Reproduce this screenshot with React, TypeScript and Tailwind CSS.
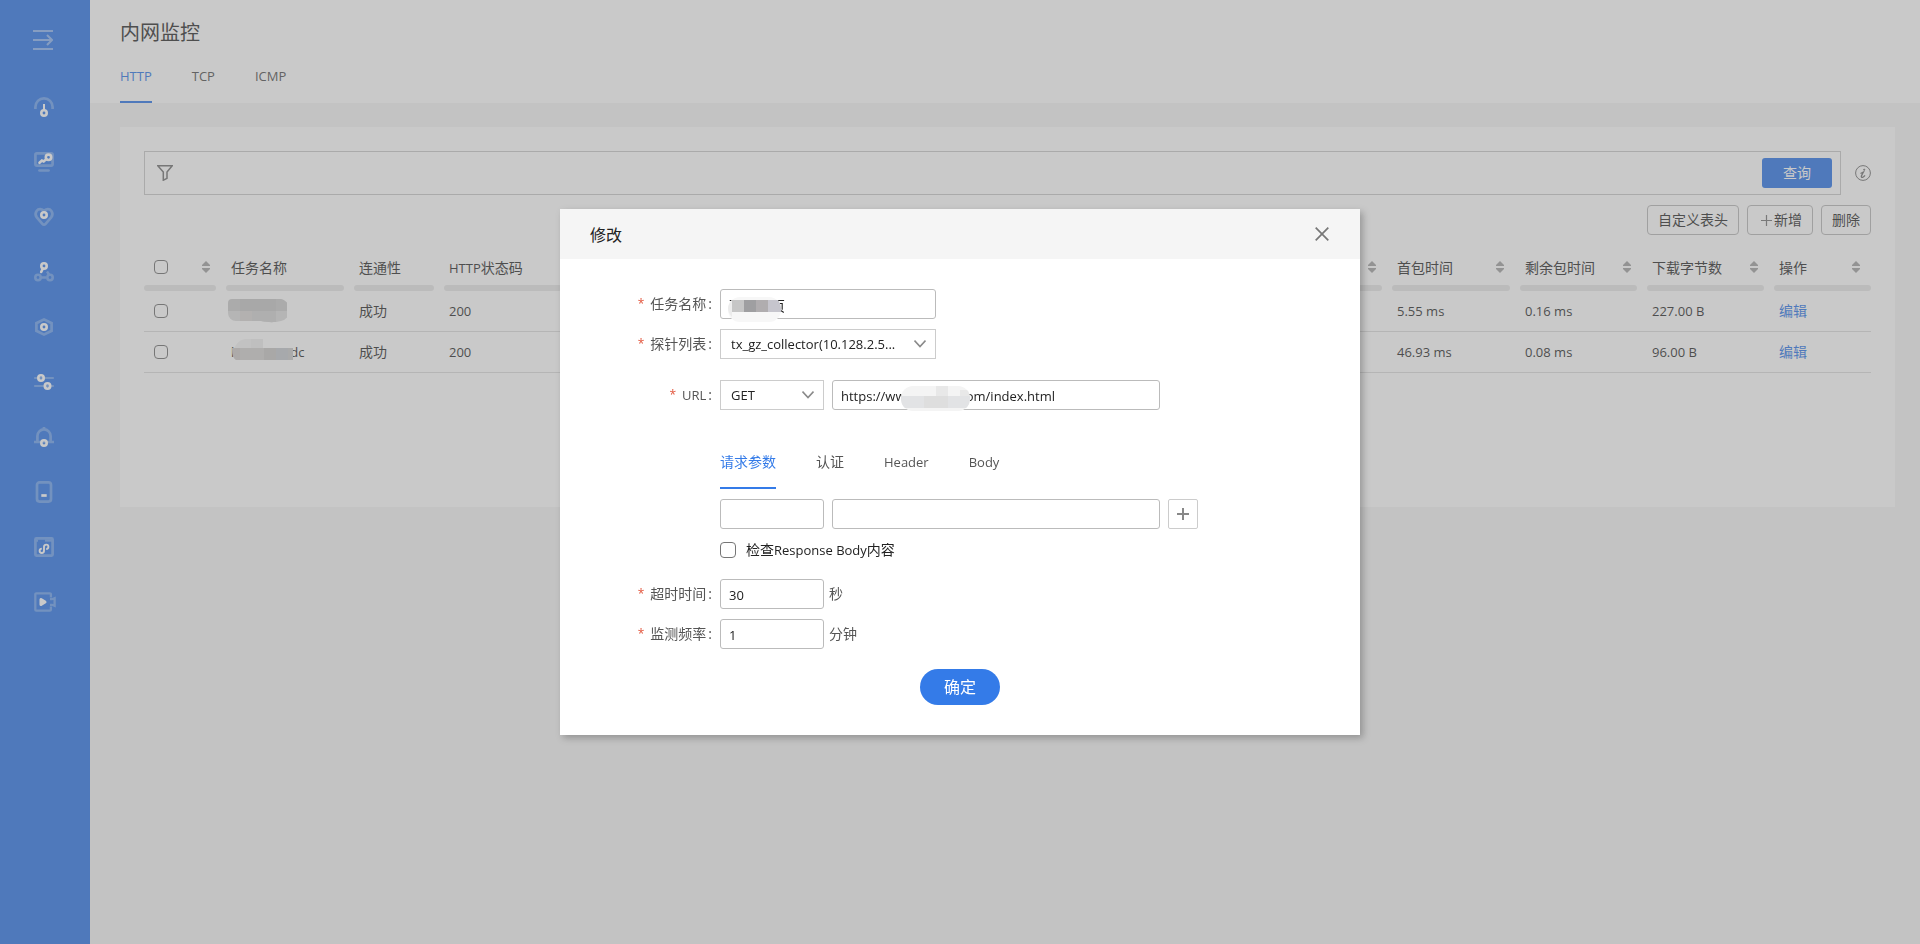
import type { ReactNode } from "react";

const params = ["请求参数", "认证", "Header", "Body"];
const pageTabs = ["HTTP", "TCP", "ICMP"];

const rows = [
  { status: "成功", code: "200", first: "5.55 ms", rest: "0.16 ms", bytes: "227.00 B" },
  { status: "成功", code: "200", first: "46.93 ms", rest: "0.08 ms", bytes: "96.00 B" },
];

const columns = [
  { key: "name", title: "任务名称", width: "w-32", sort: false },
  { key: "status", title: "连通性", width: "w-[90px]", sort: false },
  { key: "code", title: "HTTP状态码", width: "w-32", sort: false },
  { key: "more", title: "", width: "", sort: true },
  { key: "first", title: "首包时间", width: "w-32", sort: true },
  { key: "rest", title: "剩余包时间", width: "w-[127px]", sort: true },
  { key: "bytes", title: "下载字节数", width: "w-[127px]", sort: true },
  { key: "action", title: "操作", width: "w-[102px]", sort: true },
];

function Ring({ x, y }: { x: number; y: number }) {
  return <circle cx={x} cy={y} r="2.7" strokeWidth="2.6" />;
}

const menu: { label: string; faint: ReactNode; solid: ReactNode }[] = [
  {
    label: "总览",
    faint: <path d="M1.4 12v-2a8.6 8.6 0 0 1 17.2 0v2" />,
    solid: (
      <>
        <path d="M10 7v6" strokeWidth="2" />
        <Ring x={10} y={16} />
      </>
    ),
  },
  {
    label: "监控",
    faint: (
      <>
        <rect x="1.4" y="1.4" width="17.2" height="12.2" rx="1.5" />
        <path d="M5.5 18.5h9" strokeLinecap="round" />
      </>
    ),
    solid: (
      <>
        <path d="M5.5 10.8l2.4-2.3 1.8 1 2.6-2.4" strokeWidth="2.6" strokeLinecap="round" />
        <Ring x={14.5} y={5.3} />
      </>
    ),
  },
  {
    label: "健康",
    faint: (
      <path d="M10 4.2C8.2 1.6 4.4 1.5 2.6 4c-1.4 2-1.2 4.6.2 6.4l5.6 6.5c.9 1 2.3 1 3.2 0l5.6-6.5c1.4-1.8 1.6-4.4.2-6.4-1.8-2.5-5.6-2.4-7.4.2z" />
    ),
    solid: <Ring x={10} y={8} />,
  },
  {
    label: "拓扑",
    faint: (
      <>
        <Ring x={4} y={15.5} />
        <Ring x={16} y={15.5} />
        <path d="M7 15.5h5M13 9.5l2.400 3.500" strokeWidth="2.4" />
      </>
    ),
    solid: (
      <>
        <path d="M8.8 6.5L7.2 10" strokeWidth="2.6" strokeLinecap="round" />
        <Ring x={10} y={4} />
      </>
    ),
  },
  {
    label: "节点",
    faint: <path d="M10 2.4l7.6 3.8v7.6L10 17.6l-7.6-3.8V6.2z" />,
    solid: <Ring x={10} y={10} />,
  },
  {
    label: "设置",
    faint: <path d="M1 6h18M1 14h18" strokeWidth="2.2" strokeLinecap="round" />,
    solid: (
      <>
        <Ring x={7} y={6} />
        <Ring x={13.5} y={14} />
      </>
    ),
  },
  {
    label: "告警",
    faint: <path d="M10 0v2.5M0 15h20M3.4 15V9a6.6 6.6 0 0 1 13.2 0v6" />,
    solid: <Ring x={10} y={16} />,
  },
  {
    label: "终端",
    faint: <rect x="3" y="0.4" width="14" height="19.2" rx="2.5" />,
    solid: <path d="M7.300 13.500h5.400" />,
  },
  {
    label: "接入",
    faint: (
      <>
        <rect x="1.4" y="1.4" width="17.2" height="17.2" rx="1" />
        <path d="M11 3.6h7" strokeWidth="2.2" />
        <path d="M2 3.6h2" strokeWidth="2.2" />
      </>
    ),
    solid: (
      <path d="M12.2 12a2.2 2.2 0 1 0-2.2-2.2v4a2.2 2.2 0 1 1-2.2-2.2" strokeWidth="1.9" />
    ),
  },
  {
    label: "回放",
    faint: (
      <path
        d="M16.9 5.5V2.3c0-.6-.4-1-1-1H2.3c-.6 0-1 .4-1 1v15.4c0 .6.4 1 1 1h13.6c.6 0 1-.4 1-1v-3.2M16 7.2h2l2.6-1v7.6l-2.6-1h-2"
        strokeWidth="2.3"
      />
    ),
    solid: <path d="M7 7.500v5l4-2.500z" strokeWidth="3" strokeLinejoin="round" />,
  },
];

function Sidebar() {
  return (
    <nav className="flex w-[90px] shrink-0 flex-col bg-[#347be8] pr-[2px]">
      <button type="button" aria-label="展开菜单" className="flex h-20 items-center justify-center pr-[2px]">
        <svg width="20" height="20" viewBox="0 0 20 20" fill="none" stroke="#fff" strokeWidth="2" opacity="0.45">
          <path d="M0 1h20M0 19h20M0 10h19M14 5l5 5-5 5" />
        </svg>
      </button>
      {menu.map((item) => (
        <a key={item.label} href="#" aria-label={item.label} className="flex h-[55px] justify-center pt-[15px]">
          <svg width="24" height="24" viewBox="-2 -2 24 24" fill="none" stroke="#fff" strokeWidth="2.7">
            <g opacity="0.3">{item.faint}</g>
            {item.solid}
          </svg>
        </a>
      ))}
    </nav>
  );
}

function SortIcon() {
  return (
    <svg width="8" height="12" viewBox="0 0 8 12" fill="#a6a6a6" className="shrink-0">
      <path d="M4 0l4 4v1H0V4zM4 12l4-4V7H0v1z" />
    </svg>
  );
}

function Chevron() {
  return (
    <svg
      width="12"
      height="8"
      viewBox="0 0 12 8"
      fill="none"
      stroke="#8a8a8a"
      strokeWidth="1.6"
      className="pointer-events-none absolute right-[10px] top-[11px]"
    >
      <path d="M.5.600L6 6.600l5.500-6" />
    </svg>
  );
}

function PlusIcon() {
  return (
    <svg width="16" height="12" viewBox="0 0 16 12" stroke="#7b7b7b" strokeWidth="1.2">
      <path d="M3 6.500h11M8.500 1v11" />
    </svg>
  );
}

// pixelated patches that hide private names
function NameMask() {
  return (
    <svg width="59" height="24" viewBox="0 0 59 24" className="-ml-[3px]">
      <clipPath id="name-mask">
        <path d="M4 0h44a11 11 0 0 1 5 22c-8 2-14 1-20 0H8a8 8 0 0 1-8-8V4a4 4 0 0 1 4-4z" />
      </clipPath>
      <g clipPath="url(#name-mask)">
        <path fill="#cecece" d="M0 0h59v12H0z" />
        <path fill="#c8c8c8" d="M12 0h36v12H12z" />
        <path fill="#dedede" d="M0 12h59v12H0z" />
        <path fill="#dad7d5" d="M12 12h12v12H12z" />
        <path fill="#d4d4d4" d="M24 12h24v12H24z" />
      </g>
    </svg>
  );
}

function HostMask() {
  return (
    <svg width="62" height="22" viewBox="0 0 62 22" className="z-10 -ml-[2px] -mr-1 mb-1">
      <path fill="#f4f4f4" d="M2 10c2-6 7-10 12-10h17v10z" />
      <path fill="#efefef" d="M19 0h12v10H19z" />
      <path fill="#d0ccca" d="M0 9h8v12H4c-3-2-4-6-4-12z" />
      <path fill="#d4d2d0" d="M8 9h24v12H8z" />
      <path fill="#cac9c6" d="M32 9h12v12H32z" />
      <path fill="#c6cacf" d="M44 9h12v12H44z" />
      <path fill="#cbcbcb" d="M56 9h5v12h-5z" />
    </svg>
  );
}

function TaskMask() {
  return (
    <svg width="53" height="25" viewBox="0 0 53 25" className="pointer-events-none absolute left-2 top-2">
      <rect width="53" height="25" rx="12" fill="#f7f7f7" />
      <path fill="#ececec" d="M4 3v17C1 17 0 14 0 11s2-6 4-8z" />
      <path fill="#c6c6c6" d="M4 3h12v12H4z" />
      <path fill="#9f9fa1" d="M16 3h12v12H16z" />
      <path fill="#b0adaf" d="M28 3h12v12H28z" />
      <path fill="#c6c5cd" d="M40 3h10c2 3 3 6 3 9v3H40z" />
    </svg>
  );
}

function UrlMask() {
  return (
    <svg width="69" height="25" viewBox="0 0 69 25" className="pointer-events-none absolute left-[69px] top-[6px]">
      <clipPath id="url-mask">
        <rect width="69" height="25" rx="12" />
      </clipPath>
      <g clipPath="url(#url-mask)">
        <path fill="#f4f4f4" d="M0 0h69v25H0z" />
        <path fill="#e8e8e8" d="M35 0h12v10H35zM59 4h10v6H59z" />
        <path fill="#e2e3e5" d="M0 10h69v12H0z" />
        <path fill="#dedede" d="M23 10h24v12H23z" />
      </g>
    </svg>
  );
}

const inputClass =
  "h-[30px] rounded-[3px] border border-[#bbb] bg-white px-2 pt-[2px] text-[#222] outline-none";
const selectClass =
  "h-[30px] w-full appearance-none border border-[#ccc] bg-white pl-[10px] text-[13px] text-[#222] outline-none";
const actionClass =
  "flex h-[30px] items-center rounded-[4px] border border-[#bbb] px-[10px] text-[#333]";
const tabClass = "h-[55px] border-b-2 pt-[2px]";

function FormRow({ label, htmlFor, children }: { label?: string; htmlFor?: string; children: ReactNode }) {
  return (
    <div className="flex">
      <div className="flex h-[30px] w-[160px] shrink-0 items-center justify-end pr-2">
        {label && (
          <label htmlFor={htmlFor} className="flex items-center text-[#555]">
            <span className="mr-[6px] text-xs text-[#e2543b]">*</span>
            {label === "URL" ? <span className="text-[13px]">{label}</span> : label}
            <span className="ml-[2px]">:</span>
          </label>
        )}
      </div>
      {children}
    </div>
  );
}

function EditDialog() {
  return (
    <div className="fixed inset-0 z-20 flex items-center justify-center bg-[#787878]/40">
      <div
        role="dialog"
        aria-labelledby="dialog-title"
        className="w-[800px] bg-white shadow-[3px_3px_7px_rgba(0,0,0,0.25)]"
      >
        <div className="flex h-[50px] items-center justify-between bg-[#f5f5f5] px-[30px]">
          <h2 id="dialog-title" className="pt-[2px] text-base text-[#222]">
            修改
          </h2>
          <button type="button" aria-label="关闭" className="flex size-4 items-center justify-center">
            <svg width="14" height="14" viewBox="0 0 14 14" stroke="#777" strokeWidth="1.7">
              <path d="M.7.7l12.600 12.600M13.300.7L.7 13.300" />
            </svg>
          </button>
        </div>
        <form className="flex flex-col pb-[30px] pt-[30px]">
          <FormRow label="任务名称" htmlFor="task">
            <div className="relative w-[216px]">
              <input id="task" type="text" defaultValue="下　　页" className={`${inputClass} w-full`} />
              <TaskMask />
            </div>
          </FormRow>
          <div className="mt-[10px]">
            <FormRow label="探针列表" htmlFor="probe">
              <div className="relative w-[216px]">
                <select id="probe" className={selectClass}>
                  <option>tx_gz_collector(10.128.2.5...</option>
                </select>
                <Chevron />
              </div>
            </FormRow>
          </div>
          <div className="mt-[21px]">
            <FormRow label="URL" htmlFor="url">
              <div className="flex gap-2">
                <div className="relative w-[104px]">
                  <select aria-label="请求方法" className={selectClass}>
                    <option>GET</option>
                    <option>POST</option>
                  </select>
                  <Chevron />
                </div>
                <div className="relative w-[328px]">
                  <input
                    id="url"
                    type="text"
                    defaultValue={"https://www.\u00a0\u00a0\u00a0\u00a0\u00a0\u00a0\u00a0\u00a0\u00a0\u00a0\u00a0\u00a0com/index.html"}
                    className={`${inputClass} w-full text-[13px]`}
                  />
                  <UrlMask />
                </div>
              </div>
            </FormRow>
          </div>
          <div className="ml-[160px] mt-6 flex gap-10" role="tablist">
            {params.map((tab, i) => (
              <button
                key={tab}
                type="button"
                role="tab"
                aria-selected={i === 0}
                className={`${tabClass} ${i > 1 ? "text-[13px]" : ""} ${
                  i === 0 ? "border-[#347be8] text-[#347be8]" : "border-transparent text-[#555]"
                }`}
              >
                {tab}
              </button>
            ))}
          </div>
          <div className="mt-[10px]">
            <FormRow>
              <div className="flex gap-2">
                <input type="text" aria-label="参数名" className={`${inputClass} w-[104px]`} />
                <input type="text" aria-label="参数值" className={`${inputClass} w-[328px]`} />
                <button
                  type="button"
                  aria-label="添加参数"
                  className="flex size-[30px] items-center justify-center rounded-[2px] border border-[#ccc]"
                >
                  <svg width="12" height="12" viewBox="0 0 12 12" stroke="#888" strokeWidth="2">
                    <path d="M0 6h12M6 0v12" />
                  </svg>
                </button>
              </div>
            </FormRow>
          </div>
          <label className="ml-[160px] mt-[10px] flex h-[22px] items-center gap-[10px] text-[#222]">
            <input type="checkbox" className="size-4 appearance-none rounded-[4px] border border-[#767676]" />
            <span>
              检查<span className="text-[13px]">Response Body</span>内容
            </span>
          </label>
          <div className="mt-[18px] flex flex-col gap-[10px]">
            <FormRow label="超时时间" htmlFor="timeout">
              <div className="flex items-center gap-[5px] text-[#555]">
                <input id="timeout" type="text" defaultValue="30" className={`${inputClass} w-[104px] text-[13px]`} />
                秒
              </div>
            </FormRow>
            <FormRow label="监测频率" htmlFor="interval">
              <div className="flex items-center gap-[5px] text-[#555]">
                <input id="interval" type="text" defaultValue="1" className={`${inputClass} w-[104px] text-[13px]`} />
                分钟
              </div>
            </FormRow>
          </div>
          <button type="submit" className="mx-auto mt-5 h-9 w-20 rounded-full bg-[#347be8] text-base text-white">
            确定
          </button>
        </form>
      </div>
    </div>
  );
}

function TaskTable() {
  const check = "block size-[14px] appearance-none rounded-[4px] border border-[#767676]";
  return (
    <table className="mt-[14px] w-full table-fixed border-separate border-spacing-0 text-left text-[#333]">
      <thead>
        <tr>
          <th className="w-[77px] p-0 pr-[5px] font-normal">
            <div className="flex h-9 items-center justify-between pl-[10px] pr-[6px]">
              <input type="checkbox" aria-label="全选" className={check} />
              <SortIcon />
            </div>
            <div className="h-[6px] rounded-full bg-[#e8e8e8]" />
          </th>
          {columns.map((col) => (
            <th
              key={col.key}
              className={`p-0 pl-[5px] font-normal ${col.key === "action" ? "" : "pr-[5px]"} ${col.width}`}
            >
              <div
                className={`flex h-9 items-center justify-between pl-[5px] ${
                  col.key === "action" ? "pr-[11px]" : "pr-[6px]"
                }`}
              >
                {col.key === "code" ? (
                  <span className="pt-[2px]">
                    <span className="text-[13px]">HTTP</span>状态码
                  </span>
                ) : (
                  <span className="pt-[2px]">{col.title}</span>
                )}
                {col.sort && <SortIcon />}
              </div>
              <div className="h-[6px] rounded-full bg-[#e8e8e8]" />
            </th>
          ))}
        </tr>
      </thead>
      <tbody>
        {rows.map((row, i) => (
          <tr key={row.first} className="h-[41px] [&>td]:border-b [&>td]:border-[#dedede] [&>td]:py-0">
            <td className="pl-[10px]">
              <input type="checkbox" aria-label={`选择第${i + 1}行`} className={check} />
            </td>
            <td className="pl-[10px]">
              {i === 0 ? (
                <NameMask />
              ) : (
                <div className="flex items-center text-[13px]">
                  l
                  <HostMask />
                  dc
                </div>
              )}
            </td>
            <td className="pl-[10px]">{row.status}</td>
            <td className="pl-[10px] text-[13px]">{row.code}</td>
            <td />
            <td className="pl-[10px] text-[13px]">{row.first}</td>
            <td className="pl-[10px] text-[13px]">{row.rest}</td>
            <td className="pl-[10px] text-[13px]">{row.bytes}</td>
            <td className="pl-[10px]">
              <a href="#" className="text-[#347be8]">
                编辑
              </a>
            </td>
          </tr>
        ))}
      </tbody>
    </table>
  );
}

function App() {
  return (
    <div className="flex min-h-screen bg-[#f5f5f5] font-['Open_Sans','Noto_Sans_CJK_SC',sans-serif] text-[14px] leading-5">
      <Sidebar />
      <main className="flex min-w-0 flex-1 flex-col">
        <header className="bg-white px-[30px] pt-4">
          <h1 className="pt-[2px] text-[20px] leading-[30px] text-[#333]">内网监控</h1>
          <div className="flex gap-10 text-[13px]" role="tablist">
            {pageTabs.map((tab, i) => (
              <button
                key={tab}
                type="button"
                role="tab"
                aria-selected={i === 0}
                className={`${tabClass} ${
                  i === 0 ? "border-[#347be8] text-[#347be8]" : "border-transparent text-[#555]"
                }`}
              >
                {tab}
              </button>
            ))}
          </div>
        </header>
        <section className="ml-[30px] mr-[25px] mt-6 min-h-[380px] bg-white p-6">
          <div className="flex items-center gap-[14px]">
            <div className="flex h-11 flex-1 items-center border border-[#ccc] pl-3 pr-2">
              <svg width="16" height="16" viewBox="0 0 16 16" fill="none" stroke="#777" strokeWidth="1.500">
                <path d="M.8.8h14.400L10 7v6.300L6.300 15.200V7z" />
              </svg>
              <input type="text" aria-label="筛选" className="h-full min-w-0 flex-1 px-2 outline-none" />
              <button type="button" className="h-[30px] w-[70px] rounded-[3px] bg-[#347be8] text-white">
                查询
              </button>
            </div>
            <button type="button" aria-label="说明">
              <svg width="16" height="16" viewBox="0 0 16 16" fill="none" stroke="#777">
                <circle cx="8" cy="8" r="7.400" />
                <path d="M5.500 8.500l3-1.500c-1 2-2.200 3.300-2.200 4.600 0 1.600 2.400.6 3.700-1.200" strokeWidth="1.300" />
                <circle cx="9.200" cy="4.700" r=".6" fill="#777" />
              </svg>
            </button>
          </div>
          <div className="mt-[10px] flex justify-end gap-2">
            <button type="button" className={actionClass}>
              自定义表头
            </button>
            <button type="button" className={actionClass}>
              <PlusIcon />
              新增
            </button>
            <button type="button" className={actionClass}>
              删除
            </button>
          </div>
          <TaskTable />
        </section>
      </main>
      <EditDialog />
    </div>
  );
}

export default App;
